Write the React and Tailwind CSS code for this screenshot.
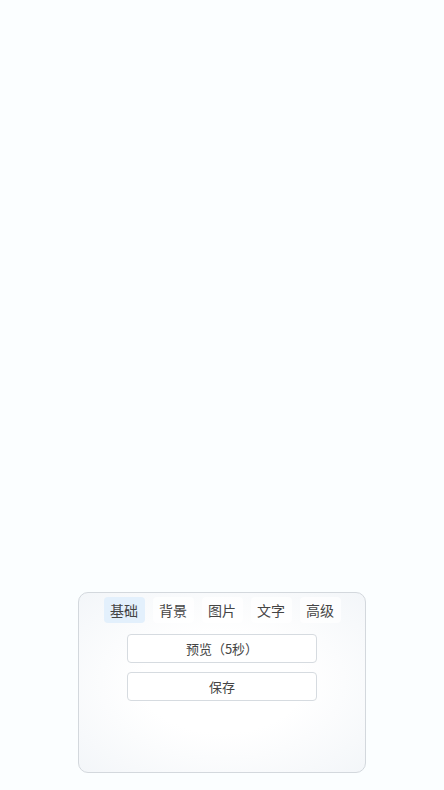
import { useState } from 'react'

const tabs = ['基础', '背景', '图片', '文字', '高级']

export default function App() {
  const [active, setActive] = useState(0)

  return (
    <div
      className="min-h-screen flex flex-col items-center justify-end pb-[17px] bg-[#fbfeff] text-[#454545]"
      style={{ fontFamily: '"Noto Sans CJK SC", "Noto Sans", sans-serif' }}
    >
      {/* Settings panel */}
      <div className="w-[288px] h-[181px] rounded-[10px] border border-[#d3d8dd] bg-[radial-gradient(ellipse_at_center,#ffffff_40%,#f3f6f9_100%)] pt-[4px]">
        <div className="flex justify-center gap-2">
          {tabs.map((t, i) => (
            <button
              key={t}
              onClick={() => setActive(i)}
              className={`w-[41px] h-[26px] rounded-[4px] text-[14px] leading-none ${
                i === active ? 'bg-[#e3f0fc]' : 'bg-white/70'
              }`}
            >
              {t}
            </button>
          ))}
        </div>
        <div className="mt-[11px] flex flex-col items-center gap-[9px]">
          <button className="w-[190px] h-[29px] rounded-[4px] border border-[#d6dbe0] bg-white text-[13px] text-[#454545]">
            预览（5秒）
          </button>
          <button className="w-[190px] h-[29px] rounded-[4px] border border-[#d6dbe0] bg-white text-[13px] text-[#454545]">
            保存
          </button>
        </div>
      </div>
    </div>
  )
}
